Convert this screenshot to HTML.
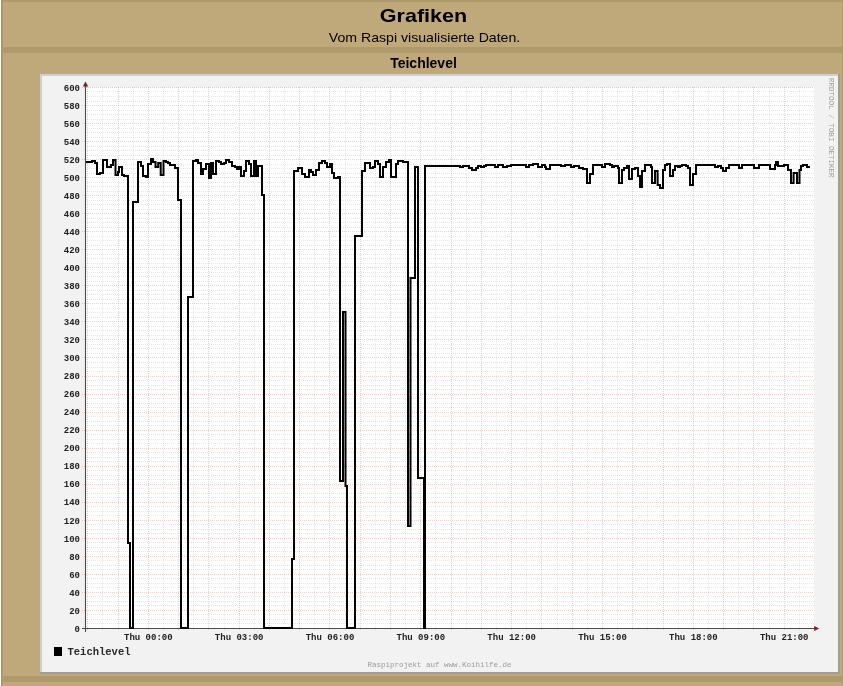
<!DOCTYPE html>
<html><head><meta charset="utf-8"><style>
html,body{margin:0;padding:0;}
body{width:843px;height:686px;position:relative;overflow:hidden;background:#ae9a6b;font-family:"Liberation Sans",sans-serif;}
.p{position:absolute;background:#bfa87a;}
.t{position:absolute;left:3px;width:839px;text-align:center;color:#000;white-space:nowrap;will-change:transform;}
</style></head><body>
<div style="position:absolute;left:0;top:0;width:1px;height:686px;background:#fffff2"></div>
<div style="position:absolute;left:1px;top:0;width:1px;height:686px;background:#a29278"></div>
<div class="p" style="left:3px;top:2px;width:839px;height:45px"></div>
<div class="p" style="left:3px;top:53px;width:839px;height:623px"></div>
<div class="p" style="left:3px;top:682px;width:839px;height:4px"></div>
<div class="t" id="h1" style="top:5px;left:4px;font-size:19px;font-weight:bold;transform:scaleX(1.133)">Grafiken</div>
<div class="t" id="h2" style="top:30px;left:4.5px;font-size:13px;transform:scaleX(1.086)">Vom Raspi visualisierte Daten.</div>
<div class="t" id="h3" style="top:55px;left:4px;font-size:14px;font-weight:bold;">Teichlevel</div>
<svg width="800" height="600" viewBox="0 0 800 600" style="position:absolute;left:40px;top:74px;will-change:transform">
<rect x="0" y="0" width="800" height="600" fill="#f2f2f2"/>
<rect x="0" y="0" width="800" height="2" fill="#cfcfcf"/>
<rect x="0" y="0" width="2" height="600" fill="#cfcfcf"/>
<rect x="0" y="598" width="800" height="2" fill="#9e9e9e"/>
<rect x="798" y="0" width="2" height="600" fill="#9e9e9e"/>
<rect x="45.5" y="13.48" width="728.5" height="541.02" fill="#ffffff"/>
<g stroke="rgba(130,130,130,0.16)" stroke-width="1" stroke-dasharray="1 1"><line x1="62.5" y1="13" x2="62.5" y2="556"/><line x1="93.5" y1="13" x2="93.5" y2="556"/><line x1="123.5" y1="13" x2="123.5" y2="556"/><line x1="153.5" y1="13" x2="153.5" y2="556"/><line x1="184.5" y1="13" x2="184.5" y2="556"/><line x1="214.5" y1="13" x2="214.5" y2="556"/><line x1="244.5" y1="13" x2="244.5" y2="556"/><line x1="274.5" y1="13" x2="274.5" y2="556"/><line x1="305.5" y1="13" x2="305.5" y2="556"/><line x1="335.5" y1="13" x2="335.5" y2="556"/><line x1="365.5" y1="13" x2="365.5" y2="556"/><line x1="395.5" y1="13" x2="395.5" y2="556"/><line x1="426.5" y1="13" x2="426.5" y2="556"/><line x1="456.5" y1="13" x2="456.5" y2="556"/><line x1="486.5" y1="13" x2="486.5" y2="556"/><line x1="517.5" y1="13" x2="517.5" y2="556"/><line x1="547.5" y1="13" x2="547.5" y2="556"/><line x1="577.5" y1="13" x2="577.5" y2="556"/><line x1="607.5" y1="13" x2="607.5" y2="556"/><line x1="638.5" y1="13" x2="638.5" y2="556"/><line x1="668.5" y1="13" x2="668.5" y2="556"/><line x1="698.5" y1="13" x2="698.5" y2="556"/><line x1="729.5" y1="13" x2="729.5" y2="556"/><line x1="759.5" y1="13" x2="759.5" y2="556"/></g>
<g stroke="rgba(130,130,130,0.19)" stroke-width="1" stroke-dasharray="1 1"><line x1="45" y1="549.5" x2="774" y2="549.5"/><line x1="45" y1="545.5" x2="774" y2="545.5"/><line x1="45" y1="540.5" x2="774" y2="540.5"/><line x1="45" y1="531.5" x2="774" y2="531.5"/><line x1="45" y1="527.5" x2="774" y2="527.5"/><line x1="45" y1="522.5" x2="774" y2="522.5"/><line x1="45" y1="513.5" x2="774" y2="513.5"/><line x1="45" y1="509.5" x2="774" y2="509.5"/><line x1="45" y1="504.5" x2="774" y2="504.5"/><line x1="45" y1="495.5" x2="774" y2="495.5"/><line x1="45" y1="491.5" x2="774" y2="491.5"/><line x1="45" y1="486.5" x2="774" y2="486.5"/><line x1="45" y1="477.5" x2="774" y2="477.5"/><line x1="45" y1="473.5" x2="774" y2="473.5"/><line x1="45" y1="468.5" x2="774" y2="468.5"/><line x1="45" y1="459.5" x2="774" y2="459.5"/><line x1="45" y1="455.5" x2="774" y2="455.5"/><line x1="45" y1="450.5" x2="774" y2="450.5"/><line x1="45" y1="441.5" x2="774" y2="441.5"/><line x1="45" y1="437.5" x2="774" y2="437.5"/><line x1="45" y1="432.5" x2="774" y2="432.5"/><line x1="45" y1="423.5" x2="774" y2="423.5"/><line x1="45" y1="419.5" x2="774" y2="419.5"/><line x1="45" y1="414.5" x2="774" y2="414.5"/><line x1="45" y1="405.5" x2="774" y2="405.5"/><line x1="45" y1="401.5" x2="774" y2="401.5"/><line x1="45" y1="396.5" x2="774" y2="396.5"/><line x1="45" y1="387.5" x2="774" y2="387.5"/><line x1="45" y1="383.5" x2="774" y2="383.5"/><line x1="45" y1="378.5" x2="774" y2="378.5"/><line x1="45" y1="369.5" x2="774" y2="369.5"/><line x1="45" y1="365.5" x2="774" y2="365.5"/><line x1="45" y1="360.5" x2="774" y2="360.5"/><line x1="45" y1="351.5" x2="774" y2="351.5"/><line x1="45" y1="347.5" x2="774" y2="347.5"/><line x1="45" y1="342.5" x2="774" y2="342.5"/><line x1="45" y1="333.5" x2="774" y2="333.5"/><line x1="45" y1="329.5" x2="774" y2="329.5"/><line x1="45" y1="324.5" x2="774" y2="324.5"/><line x1="45" y1="315.5" x2="774" y2="315.5"/><line x1="45" y1="311.5" x2="774" y2="311.5"/><line x1="45" y1="306.5" x2="774" y2="306.5"/><line x1="45" y1="297.5" x2="774" y2="297.5"/><line x1="45" y1="293.5" x2="774" y2="293.5"/><line x1="45" y1="288.5" x2="774" y2="288.5"/><line x1="45" y1="279.5" x2="774" y2="279.5"/><line x1="45" y1="274.5" x2="774" y2="274.5"/><line x1="45" y1="270.5" x2="774" y2="270.5"/><line x1="45" y1="261.5" x2="774" y2="261.5"/><line x1="45" y1="256.5" x2="774" y2="256.5"/><line x1="45" y1="252.5" x2="774" y2="252.5"/><line x1="45" y1="243.5" x2="774" y2="243.5"/><line x1="45" y1="238.5" x2="774" y2="238.5"/><line x1="45" y1="234.5" x2="774" y2="234.5"/><line x1="45" y1="225.5" x2="774" y2="225.5"/><line x1="45" y1="220.5" x2="774" y2="220.5"/><line x1="45" y1="216.5" x2="774" y2="216.5"/><line x1="45" y1="207.5" x2="774" y2="207.5"/><line x1="45" y1="202.5" x2="774" y2="202.5"/><line x1="45" y1="198.5" x2="774" y2="198.5"/><line x1="45" y1="189.5" x2="774" y2="189.5"/><line x1="45" y1="184.5" x2="774" y2="184.5"/><line x1="45" y1="180.5" x2="774" y2="180.5"/><line x1="45" y1="171.5" x2="774" y2="171.5"/><line x1="45" y1="166.5" x2="774" y2="166.5"/><line x1="45" y1="162.5" x2="774" y2="162.5"/><line x1="45" y1="153.5" x2="774" y2="153.5"/><line x1="45" y1="148.5" x2="774" y2="148.5"/><line x1="45" y1="144.5" x2="774" y2="144.5"/><line x1="45" y1="135.5" x2="774" y2="135.5"/><line x1="45" y1="130.5" x2="774" y2="130.5"/><line x1="45" y1="126.5" x2="774" y2="126.5"/><line x1="45" y1="117.5" x2="774" y2="117.5"/><line x1="45" y1="112.5" x2="774" y2="112.5"/><line x1="45" y1="108.5" x2="774" y2="108.5"/><line x1="45" y1="99.5" x2="774" y2="99.5"/><line x1="45" y1="94.5" x2="774" y2="94.5"/><line x1="45" y1="90.5" x2="774" y2="90.5"/><line x1="45" y1="81.5" x2="774" y2="81.5"/><line x1="45" y1="76.5" x2="774" y2="76.5"/><line x1="45" y1="72.5" x2="774" y2="72.5"/><line x1="45" y1="63.5" x2="774" y2="63.5"/><line x1="45" y1="58.5" x2="774" y2="58.5"/><line x1="45" y1="54.5" x2="774" y2="54.5"/><line x1="45" y1="45.5" x2="774" y2="45.5"/><line x1="45" y1="40.5" x2="774" y2="40.5"/><line x1="45" y1="36.5" x2="774" y2="36.5"/><line x1="45" y1="27.5" x2="774" y2="27.5"/><line x1="45" y1="22.5" x2="774" y2="22.5"/><line x1="45" y1="17.5" x2="774" y2="17.5"/></g>
<g stroke="rgba(200,95,95,0.3)" stroke-width="1" stroke-dasharray="1 1"><line x1="47.5" y1="13" x2="47.5" y2="557"/><line x1="78.5" y1="13" x2="78.5" y2="557"/><line x1="108.5" y1="13" x2="108.5" y2="557"/><line x1="138.5" y1="13" x2="138.5" y2="557"/><line x1="168.5" y1="13" x2="168.5" y2="557"/><line x1="199.5" y1="13" x2="199.5" y2="557"/><line x1="229.5" y1="13" x2="229.5" y2="557"/><line x1="259.5" y1="13" x2="259.5" y2="557"/><line x1="289.5" y1="13" x2="289.5" y2="557"/><line x1="320.5" y1="13" x2="320.5" y2="557"/><line x1="350.5" y1="13" x2="350.5" y2="557"/><line x1="380.5" y1="13" x2="380.5" y2="557"/><line x1="411.5" y1="13" x2="411.5" y2="557"/><line x1="441.5" y1="13" x2="441.5" y2="557"/><line x1="471.5" y1="13" x2="471.5" y2="557"/><line x1="501.5" y1="13" x2="501.5" y2="557"/><line x1="532.5" y1="13" x2="532.5" y2="557"/><line x1="562.5" y1="13" x2="562.5" y2="557"/><line x1="592.5" y1="13" x2="592.5" y2="557"/><line x1="623.5" y1="13" x2="623.5" y2="557"/><line x1="653.5" y1="13" x2="653.5" y2="557"/><line x1="683.5" y1="13" x2="683.5" y2="557"/><line x1="713.5" y1="13" x2="713.5" y2="557"/><line x1="744.5" y1="13" x2="744.5" y2="557"/><line x1="42" y1="536.5" x2="774" y2="536.5"/><line x1="42" y1="518.5" x2="774" y2="518.5"/><line x1="42" y1="500.5" x2="774" y2="500.5"/><line x1="42" y1="482.5" x2="774" y2="482.5"/><line x1="42" y1="464.5" x2="774" y2="464.5"/><line x1="42" y1="446.5" x2="774" y2="446.5"/><line x1="42" y1="428.5" x2="774" y2="428.5"/><line x1="42" y1="410.5" x2="774" y2="410.5"/><line x1="42" y1="392.5" x2="774" y2="392.5"/><line x1="42" y1="374.5" x2="774" y2="374.5"/><line x1="42" y1="356.5" x2="774" y2="356.5"/><line x1="42" y1="338.5" x2="774" y2="338.5"/><line x1="42" y1="320.5" x2="774" y2="320.5"/><line x1="42" y1="302.5" x2="774" y2="302.5"/><line x1="42" y1="283.5" x2="774" y2="283.5"/><line x1="42" y1="265.5" x2="774" y2="265.5"/><line x1="42" y1="247.5" x2="774" y2="247.5"/><line x1="42" y1="229.5" x2="774" y2="229.5"/><line x1="42" y1="211.5" x2="774" y2="211.5"/><line x1="42" y1="193.5" x2="774" y2="193.5"/><line x1="42" y1="175.5" x2="774" y2="175.5"/><line x1="42" y1="157.5" x2="774" y2="157.5"/><line x1="42" y1="139.5" x2="774" y2="139.5"/><line x1="42" y1="121.5" x2="774" y2="121.5"/><line x1="42" y1="103.5" x2="774" y2="103.5"/><line x1="42" y1="85.5" x2="774" y2="85.5"/><line x1="42" y1="67.5" x2="774" y2="67.5"/><line x1="42" y1="49.5" x2="774" y2="49.5"/><line x1="42" y1="31.5" x2="774" y2="31.5"/><line x1="42" y1="13.5" x2="774" y2="13.5"/></g>
<defs><clipPath id="cp"><rect x="45.5" y="0" width="728.5" height="555.0"/></clipPath></defs>
<line x1="45.5" y1="558.0" x2="45.5" y2="11.48" stroke="#4a4a4a" stroke-width="1.1"/>
<line x1="42.0" y1="554.5" x2="775" y2="554.5" stroke="#4a4a4a" stroke-width="1.1"/>
<path d="M46 88H52V87H55V89H57V100H60V99H63V86H67V93H71V91H73V86H75.5V101H78V98H79V93H82V101H84V102H88V469H90V554H93V128H98V88H101V92H103V102H106V103H108V90H111V85H113V88H115.5V93H118.2V89H120.7V101H123.5V87H126V88H128V89H130V91H135V94H138V126H141V554H148V223H153V87H156V86H158V89H161V100H163V95H166V90H169V104H171V89H173V100H176V87H179V88H181V90H184V89H186V86H189V88H192V92H195V93H197V95H199V93H201V102H204V97H206V87H209V90H211V102H214V87H216V102H218V92H222V121H224V554H252V485H254V97H258V94H262V100H265V103H269V96H271V98H273V101H276V96H279V89H282V87H285V89H287V93H290V90H292V99H294V104H298V103H300V407H303V238H305.5V412H307V554H315V162H322V97H325V89H330V94H333V93H335V87H338V90H340V103H343V93H346V88H349V86H351V103H356V90H358V87H363V88H368V452H370.5V204H375V93H378V404H384V554H385V92H420V93H423V92H429V94H432V96H436V94H438V92H441V93H444V92H446V91H455V93H458V91H463V93H467V92H471V91H486V93H489V91H493V90H498V93H502V91H505V93H506V95H510V91H521V92H525V91H531V93H534V92H539V94H543V95H547V109H550V100H553V91H562V93H565V90H570V91H572V93H574V92H578V94H579V109H582V96H584V94H587V92H589V105H592V95H595V94H598V102H600V113H602V97H605V91H611V93H612V109H615V97H617.6V111H620V114H623V96H625V91H627V90H630V102H633V96H635V92H638V93H640V92H642V91H646V92H648V94H650V111H653V100H656V91H675V93H678V92H681V94H683V97H686V94H689V91H699V94H702V91H714V94H719V91H730V95H735V91H736V88H738V92H743V92H744V91H748V96H751V109H753.6V99H757V109H759.5V96H761V92H763V91H767V93H770" fill="none" stroke="#000" stroke-width="2" stroke-linejoin="miter" clip-path="url(#cp)"/>
<path d="M42.8 12.5 L45.5 7.5 L48.2 12.5 Z" fill="#801f1f"/>
<path d="M774.2 551.9 L779.2 554.5 L774.2 557.1 Z" fill="#801f1f"/>
<g font-family="Liberation Mono, monospace" font-size="9" font-weight="bold" fill="#222"><text x="40" y="557.7" text-anchor="end">0</text><text x="40" y="539.6700000000001" text-anchor="end">20</text><text x="40" y="521.63" text-anchor="end">40</text><text x="40" y="503.59999999999997" text-anchor="end">60</text><text x="40" y="485.56" text-anchor="end">80</text><text x="40" y="467.53" text-anchor="end">100</text><text x="40" y="449.5" text-anchor="end">120</text><text x="40" y="431.46" text-anchor="end">140</text><text x="40" y="413.43" text-anchor="end">160</text><text x="40" y="395.39" text-anchor="end">180</text><text x="40" y="377.36" text-anchor="end">200</text><text x="40" y="359.33" text-anchor="end">220</text><text x="40" y="341.28999999999996" text-anchor="end">240</text><text x="40" y="323.26" text-anchor="end">260</text><text x="40" y="305.21999999999997" text-anchor="end">280</text><text x="40" y="287.19" text-anchor="end">300</text><text x="40" y="269.15999999999997" text-anchor="end">320</text><text x="40" y="251.11999999999998" text-anchor="end">340</text><text x="40" y="233.08999999999997" text-anchor="end">360</text><text x="40" y="215.04999999999998" text-anchor="end">380</text><text x="40" y="197.01999999999998" text-anchor="end">400</text><text x="40" y="178.98999999999998" text-anchor="end">420</text><text x="40" y="160.95" text-anchor="end">440</text><text x="40" y="142.92" text-anchor="end">460</text><text x="40" y="124.88000000000001" text-anchor="end">480</text><text x="40" y="106.85000000000001" text-anchor="end">500</text><text x="40" y="88.82000000000001" text-anchor="end">520</text><text x="40" y="70.78" text-anchor="end">540</text><text x="40" y="52.75" text-anchor="end">560</text><text x="40" y="34.71" text-anchor="end">580</text><text x="40" y="16.68" text-anchor="end">600</text><text x="108.3" y="566" text-anchor="middle">Thu 00:00</text><text x="199.14" y="566" text-anchor="middle">Thu 03:00</text><text x="289.98" y="566" text-anchor="middle">Thu 06:00</text><text x="380.82" y="566" text-anchor="middle">Thu 09:00</text><text x="471.66" y="566" text-anchor="middle">Thu 12:00</text><text x="562.5" y="566" text-anchor="middle">Thu 15:00</text><text x="653.34" y="566" text-anchor="middle">Thu 18:00</text><text x="744.18" y="566" text-anchor="middle">Thu 21:00</text></g>
<rect x="14" y="573" width="8" height="9" fill="#000"/>
<text x="27.5" y="581" font-family="Liberation Mono, monospace" font-size="10.5" font-weight="bold" fill="#2a2a2a">Teichlevel</text>
<text x="399.5" y="592.5" text-anchor="middle" font-family="Liberation Mono, monospace" font-size="7.5" fill="#9a9a9a">Raspiprojekt auf www.Koihilfe.de</text>
<text transform="translate(789,4) rotate(90)" font-family="Liberation Mono, monospace" font-size="7.55" fill="#9e9e9e">RRDTOOL / TOBI OETIKER</text>
</svg>
</body></html>
